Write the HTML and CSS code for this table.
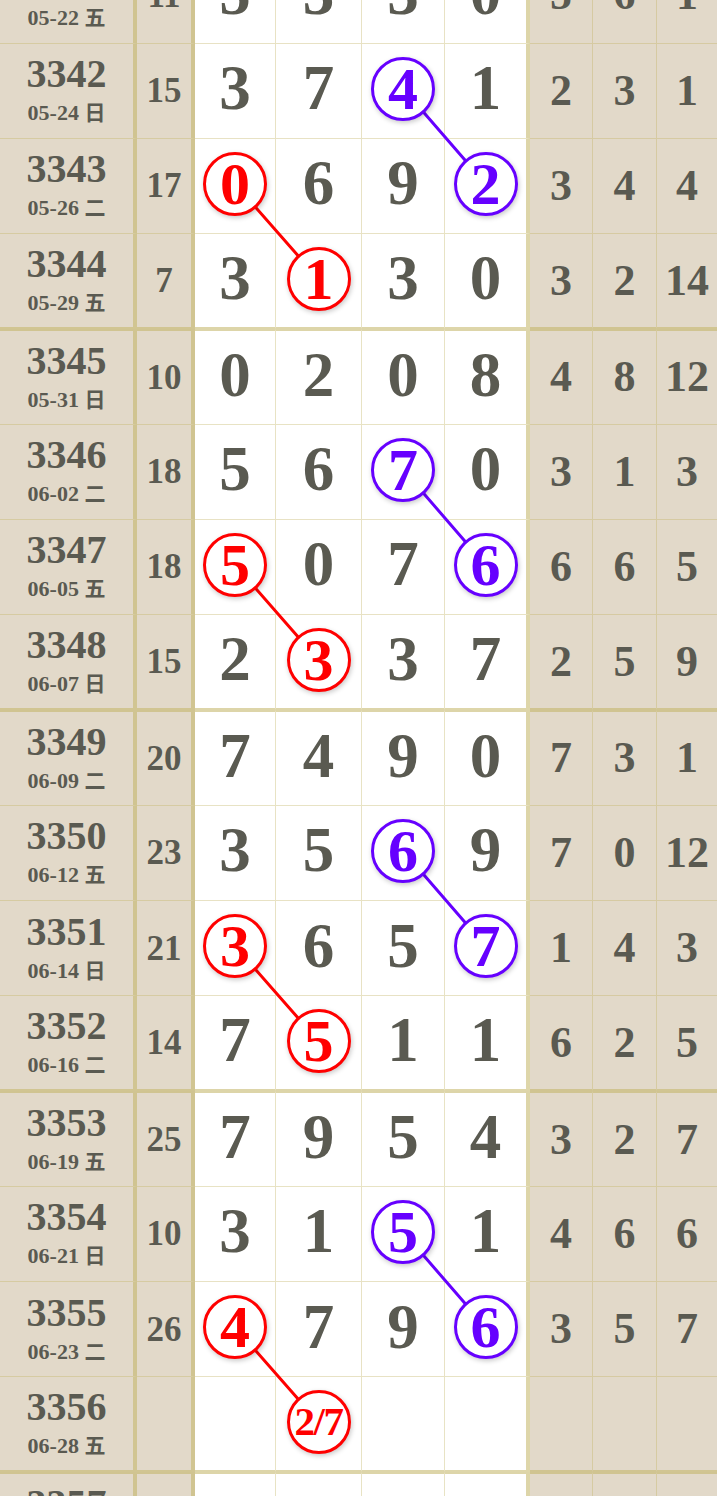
FILE: index.html
```html
<!DOCTYPE html>
<html lang="zh">
<head>
<meta charset="utf-8">
<title>走势图</title>
<link rel="stylesheet" href="styles.css">
</head>
<body>
<div class="board">
  <svg class="links" width="717" height="1620" viewBox="0 0 717 1620">
    <g class="pl">
      <line x1="403" y1="140.5" x2="485.5" y2="235.8"/>
      <line x1="403" y1="521.6" x2="485.5" y2="616.9"/>
      <line x1="403" y1="902.7" x2="485.5" y2="998"/>
      <line x1="403" y1="1283.8" x2="485.5" y2="1379"/>
    </g>
    <g class="rl">
      <line x1="235" y1="235.8" x2="318.5" y2="331"/>
      <line x1="235" y1="616.9" x2="318.5" y2="712.2"/>
      <line x1="235" y1="998" x2="318.5" y2="1093.3"/>
      <line x1="235" y1="1379" x2="318.5" y2="1474.3"/>
    </g>
  </svg>

  <div class="row">
    <div class="c per"><span class="no">3341</span><span class="dt">05-22 <i>五</i></span></div>
    <div class="c sum">11</div>
    <div class="c d">5</div><div class="c d">3</div><div class="c d">3</div><div class="c d end">0</div>
    <div class="c x">5</div><div class="c x">6</div><div class="c x last">1</div>
  </div>
  <div class="row">
    <div class="c per"><span class="no">3342</span><span class="dt">05-24 <i>日</i></span></div>
    <div class="c sum">15</div>
    <div class="c d">3</div><div class="c d">7</div><div class="c d"><span class="ring p">4</span></div><div class="c d end">1</div>
    <div class="c x">2</div><div class="c x">3</div><div class="c x last">1</div>
  </div>
  <div class="row">
    <div class="c per"><span class="no">3343</span><span class="dt">05-26 <i>二</i></span></div>
    <div class="c sum">17</div>
    <div class="c d"><span class="ring r">0</span></div><div class="c d">6</div><div class="c d">9</div><div class="c d end"><span class="ring p">2</span></div>
    <div class="c x">3</div><div class="c x">4</div><div class="c x last">4</div>
  </div>
  <div class="row q">
    <div class="c per"><span class="no">3344</span><span class="dt">05-29 <i>五</i></span></div>
    <div class="c sum">7</div>
    <div class="c d">3</div><div class="c d"><span class="ring r">1</span></div><div class="c d">3</div><div class="c d end">0</div>
    <div class="c x">3</div><div class="c x">2</div><div class="c x last">14</div>
  </div>
  <div class="row">
    <div class="c per"><span class="no">3345</span><span class="dt">05-31 <i>日</i></span></div>
    <div class="c sum">10</div>
    <div class="c d">0</div><div class="c d">2</div><div class="c d">0</div><div class="c d end">8</div>
    <div class="c x">4</div><div class="c x">8</div><div class="c x last">12</div>
  </div>
  <div class="row">
    <div class="c per"><span class="no">3346</span><span class="dt">06-02 <i>二</i></span></div>
    <div class="c sum">18</div>
    <div class="c d">5</div><div class="c d">6</div><div class="c d"><span class="ring p">7</span></div><div class="c d end">0</div>
    <div class="c x">3</div><div class="c x">1</div><div class="c x last">3</div>
  </div>
  <div class="row">
    <div class="c per"><span class="no">3347</span><span class="dt">06-05 <i>五</i></span></div>
    <div class="c sum">18</div>
    <div class="c d"><span class="ring r">5</span></div><div class="c d">0</div><div class="c d">7</div><div class="c d end"><span class="ring p">6</span></div>
    <div class="c x">6</div><div class="c x">6</div><div class="c x last">5</div>
  </div>
  <div class="row q">
    <div class="c per"><span class="no">3348</span><span class="dt">06-07 <i>日</i></span></div>
    <div class="c sum">15</div>
    <div class="c d">2</div><div class="c d"><span class="ring r">3</span></div><div class="c d">3</div><div class="c d end">7</div>
    <div class="c x">2</div><div class="c x">5</div><div class="c x last">9</div>
  </div>
  <div class="row">
    <div class="c per"><span class="no">3349</span><span class="dt">06-09 <i>二</i></span></div>
    <div class="c sum">20</div>
    <div class="c d">7</div><div class="c d">4</div><div class="c d">9</div><div class="c d end">0</div>
    <div class="c x">7</div><div class="c x">3</div><div class="c x last">1</div>
  </div>
  <div class="row">
    <div class="c per"><span class="no">3350</span><span class="dt">06-12 <i>五</i></span></div>
    <div class="c sum">23</div>
    <div class="c d">3</div><div class="c d">5</div><div class="c d"><span class="ring p">6</span></div><div class="c d end">9</div>
    <div class="c x">7</div><div class="c x">0</div><div class="c x last">12</div>
  </div>
  <div class="row">
    <div class="c per"><span class="no">3351</span><span class="dt">06-14 <i>日</i></span></div>
    <div class="c sum">21</div>
    <div class="c d"><span class="ring r">3</span></div><div class="c d">6</div><div class="c d">5</div><div class="c d end"><span class="ring p">7</span></div>
    <div class="c x">1</div><div class="c x">4</div><div class="c x last">3</div>
  </div>
  <div class="row q">
    <div class="c per"><span class="no">3352</span><span class="dt">06-16 <i>二</i></span></div>
    <div class="c sum">14</div>
    <div class="c d">7</div><div class="c d"><span class="ring r">5</span></div><div class="c d">1</div><div class="c d end">1</div>
    <div class="c x">6</div><div class="c x">2</div><div class="c x last">5</div>
  </div>
  <div class="row">
    <div class="c per"><span class="no">3353</span><span class="dt">06-19 <i>五</i></span></div>
    <div class="c sum">25</div>
    <div class="c d">7</div><div class="c d">9</div><div class="c d">5</div><div class="c d end">4</div>
    <div class="c x">3</div><div class="c x">2</div><div class="c x last">7</div>
  </div>
  <div class="row">
    <div class="c per"><span class="no">3354</span><span class="dt">06-21 <i>日</i></span></div>
    <div class="c sum">10</div>
    <div class="c d">3</div><div class="c d">1</div><div class="c d"><span class="ring p">5</span></div><div class="c d end">1</div>
    <div class="c x">4</div><div class="c x">6</div><div class="c x last">6</div>
  </div>
  <div class="row">
    <div class="c per"><span class="no">3355</span><span class="dt">06-23 <i>二</i></span></div>
    <div class="c sum">26</div>
    <div class="c d"><span class="ring r">4</span></div><div class="c d">7</div><div class="c d">9</div><div class="c d end"><span class="ring p">6</span></div>
    <div class="c x">3</div><div class="c x">5</div><div class="c x last">7</div>
  </div>
  <div class="row q">
    <div class="c per"><span class="no">3356</span><span class="dt">06-28 <i>五</i></span></div>
    <div class="c sum"></div>
    <div class="c d"></div><div class="c d"><span class="ring r small">2/7</span></div><div class="c d"></div><div class="c d end"></div>
    <div class="c x"></div><div class="c x"></div><div class="c x last"></div>
  </div>
  <div class="row">
    <div class="c per"><span class="no">3357</span><span class="dt">07-01 <i>一</i></span></div>
    <div class="c sum"></div>
    <div class="c d"></div><div class="c d"></div><div class="c d"></div><div class="c d end"></div>
    <div class="c x"></div><div class="c x"></div><div class="c x last"></div>
  </div>
</div>
</body>
</html>
```

FILE: styles.css
```css
:root {
  --beige: #e2d9c9;
  --ink: #5a5a51;
  --ln: rgba(195, 180, 100, 0.38);
  --lnk: rgba(195, 180, 100, 0.55);
  --red: #ff0000;
  --pur: #6600ff;
}

html, body {
  margin: 0;
  padding: 0;
  background: #ffffff;
  overflow: hidden;
}

body {
  font-family: "Liberation Serif", "Times New Roman", serif;
  font-weight: 700;
  color: var(--ink);
}

.board {
  position: relative;
  width: 717px;
  margin-top: -51.77px;
}

.links {
  position: absolute;
  left: 0;
  top: 0;
  z-index: 1;
  pointer-events: none;
}

.links line {
  stroke-width: 3;
  stroke-linecap: round;
}

.links .pl line { stroke: var(--pur); }
.links .rl line { stroke: var(--red); }

.row {
  display: grid;
  grid-template-columns: 137px 58px 81px 86px 83px 85px 63px 64px 60px;
  height: 95.27px;
}

.c {
  box-sizing: border-box;
  border-right: 1px solid var(--ln);
  border-bottom: 1px solid var(--ln);
  display: flex;
  align-items: center;
  justify-content: center;
  background: var(--beige);
}

.row.q .c {
  border-bottom: 2px solid var(--lnk);
}

.row.q + .row .c {
  border-top: 2px solid var(--lnk);
}

.per {
  flex-direction: column;
  border-right: 4px solid var(--lnk);
  padding-top: 1px;
}

.no {
  font-size: 40px;
  line-height: 34px;
}

.dt {
  font-size: 22px;
  line-height: 24px;
  margin-top: 8px;
  white-space: nowrap;
}

.dt i {
  font-style: normal;
  font-family: "Noto Sans CJK SC", "Noto Sans CJK JP", sans-serif;
  font-weight: 700;
  font-size: 21px;
}

.sum {
  border-right: 4px solid var(--lnk);
  font-size: 35px;
  line-height: 1;
}

.d {
  background: #ffffff;
  font-size: 63px;
  line-height: 1;
  padding-bottom: 4px;
}

.d.end {
  border-right: 4px solid var(--lnk);
}

.x {
  font-size: 44px;
  line-height: 1;
}

.x.last {
  border-right: none;
}

.ring {
  position: relative;
  z-index: 2;
  box-sizing: border-box;
  width: 64px;
  height: 64px;
  border-radius: 50%;
  border: 3px solid currentColor;
  background: #ffffff;
  display: flex;
  align-items: center;
  justify-content: center;
  font-size: 60px;
  line-height: 1;
  box-shadow: 1px 2px 5px rgba(0, 0, 0, 0.22);
}

.ring.r { color: var(--red); }
.ring.p { color: var(--pur); }

.ring.small {
  font-size: 41px;
  letter-spacing: -1.5px;
}
```
